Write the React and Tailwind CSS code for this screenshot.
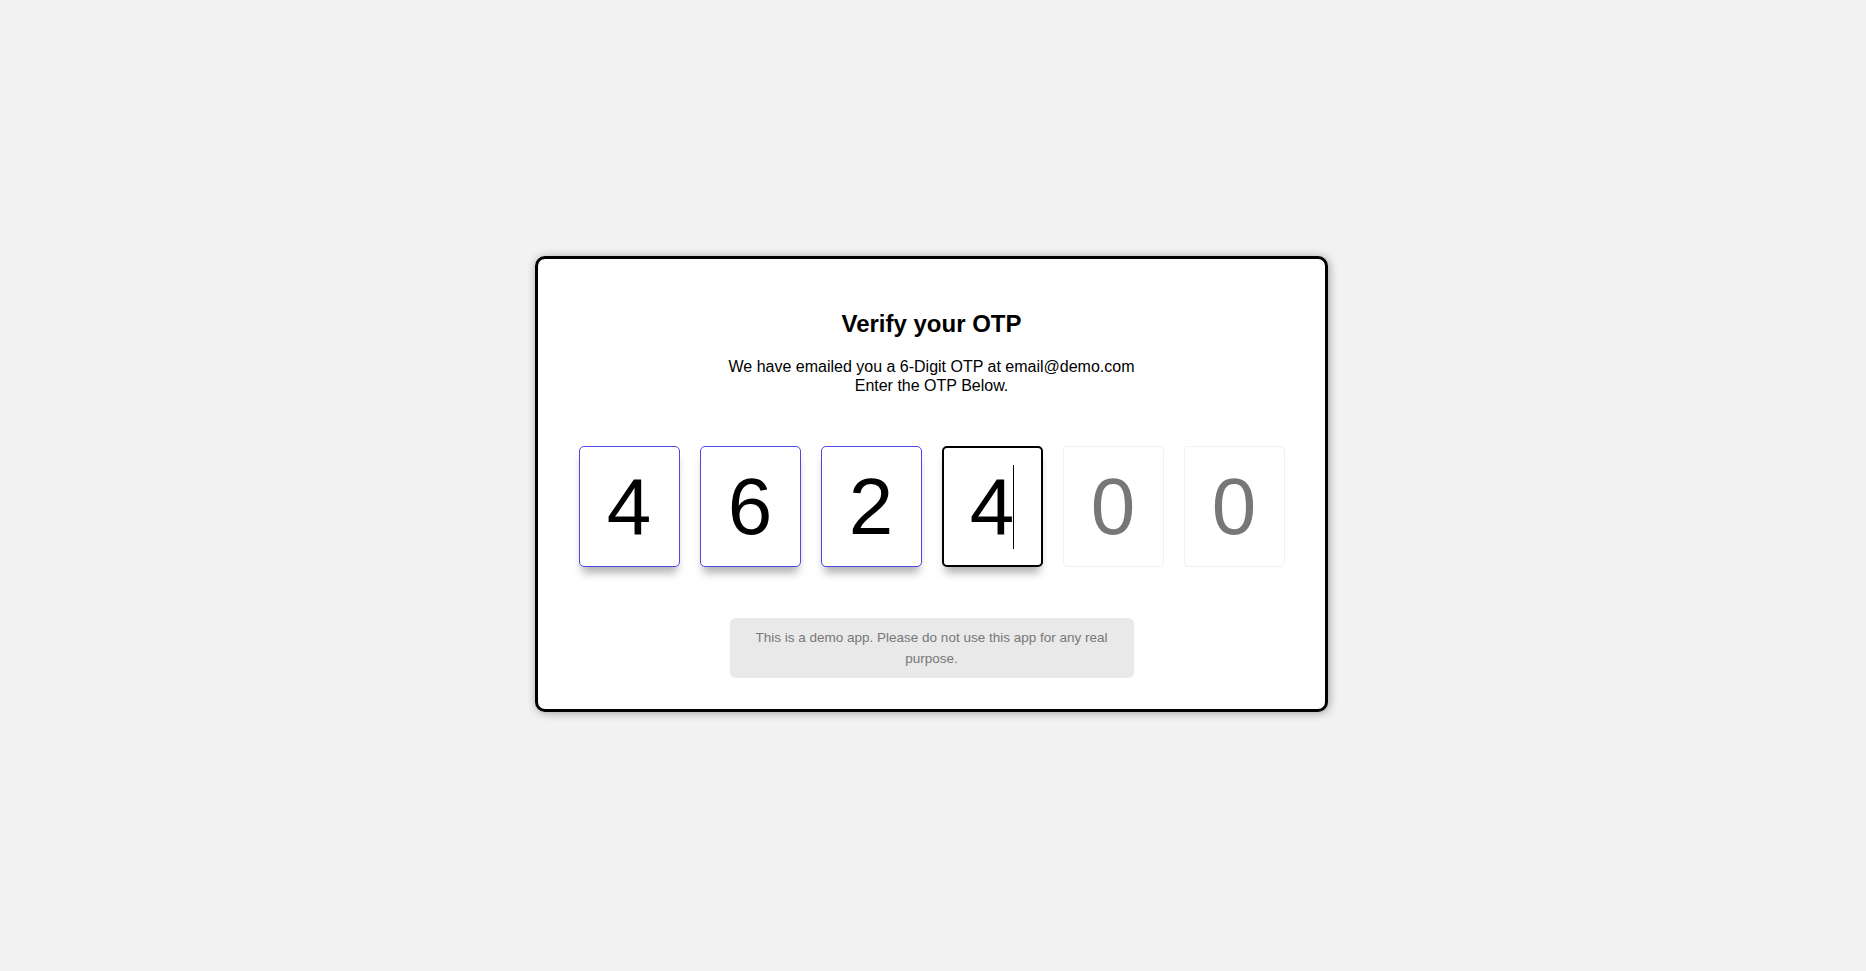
import React from 'react';

const digits = ['4', '6', '2', '4', '', ''];

export default function App() {
  return (
    <div
      className="min-h-screen w-full bg-[#f2f2f2] flex items-center justify-center"
      style={{ fontFamily: '"Liberation Sans", Arial, sans-serif' }}
    >
      <div className="w-[793px] mb-[3px] mr-[3px] bg-white border-[3px] border-black rounded-[10px] shadow-[1px_1px_10px_rgba(0,0,0,0.35)] flex flex-col items-center pt-[51px] pb-[31px]">
        <h1 className="text-[24px] leading-[28px] font-bold text-black">Verify your OTP</h1>
        <p className="mt-[20px] text-[16px] leading-[18.5px] text-black text-center">
          We have emailed you a 6-Digit OTP at email@demo.com
          <br />
          Enter the OTP Below.
        </p>

        <div className="mt-[51px] flex gap-[20px]">
          {digits.map((d, i) => {
            const filled = d !== '';
            const focused = i === 3;
            let cls = 'border border-[#f0f0f0]';
            if (filled && !focused) cls = 'border border-[#4f46e5] shadow-[0_9px_8px_-3px_rgba(0,0,0,0.3)]';
            if (focused) cls = 'border-2 border-black shadow-[0_9px_8px_-3px_rgba(0,0,0,0.3)]';
            return (
              <div key={i} className="relative">
                <input
                  readOnly
                  value={d}
                  placeholder="0"
                  className={`w-[101px] h-[121px] rounded-[5px] bg-white text-center text-[80px] text-black placeholder:text-[#777] outline-none ${cls}`}
                  style={{ fontFamily: '"Liberation Sans", Arial, sans-serif' }}
                />
                {focused && (
                  <span className="absolute left-[71px] top-[19px] w-px h-[84px] bg-black" />
                )}
              </div>
            );
          })}
        </div>

        <div className="mt-[51px] w-[404px] bg-[#e9e9e9] rounded-[6px] px-[16px] py-[9px] text-center text-[13.5px] leading-[21px] text-[#777]">
          This is a demo app. Please do not use this app for any real purpose.
        </div>
      </div>
    </div>
  );
}
